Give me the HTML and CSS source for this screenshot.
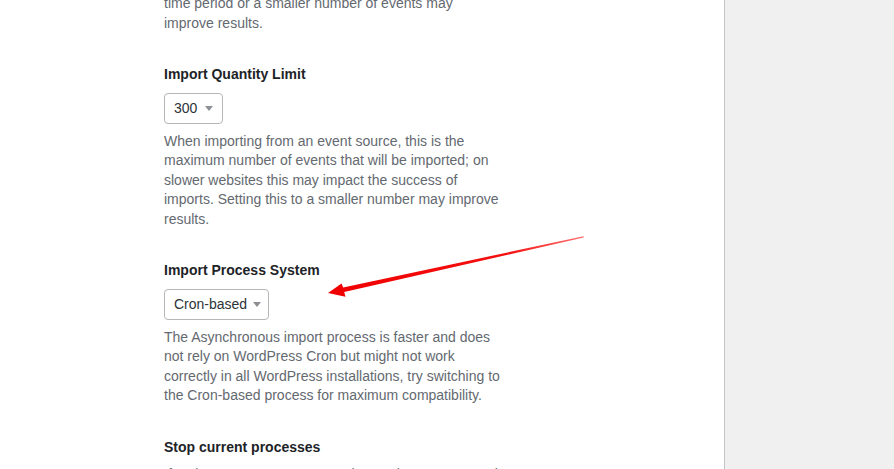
FILE: index.html
```html
<!DOCTYPE html>
<html lang="en">
<head>
  <meta charset="UTF-8" />
  <meta name="viewport" content="width=device-width, initial-scale=1.0" />
  <title>Import Settings</title>
  <link rel="stylesheet" href="styles.css">
</head>
<body>
  <div class="page">
    <div class="main">
      <div class="settings">
        <div class="field first">
          <p class="description">time period or a smaller number of events may improve results.</p>
        </div>

        <div class="field">
          <h3>Import Quantity Limit</h3>
          <div class="select small">
            <span>300</span>
            <svg width="8" height="5" viewBox="0 0 8 5"><path d="M0 0h8L4 5z" fill="#8c8f94"/></svg>
          </div>
          <p class="description">When importing from an event source, this is the maximum number of events that will be imported; on slower websites this may impact the success of imports. Setting this to a smaller number may improve results.</p>
        </div>

        <div class="field">
          <h3>Import Process System</h3>
          <div class="select">
            <span>Cron-based</span>
            <svg width="8" height="5" viewBox="0 0 8 5"><path d="M0 0h8L4 5z" fill="#8c8f94"/></svg>
          </div>
          <p class="description">The Asynchronous import process is faster and does not rely on WordPress Cron but might not work correctly in all WordPress installations, try switching to the Cron-based process for maximum compatibility.</p>
        </div>

        <div class="field">
          <h3>Stop current processes</h3>
          <p class="description">If an import process seems to be stuck, you can stop it here.</p>
        </div>
      </div>
    </div>
    <div class="sidebar"></div>

    <!-- annotation arrow -->
    <svg class="arrow" width="894" height="469" viewBox="0 0 894 469">
      <defs>
        <linearGradient id="fade" x1="328" y1="293" x2="584" y2="237" gradientUnits="userSpaceOnUse">
          <stop offset="0" stop-color="#f00000"/>
          <stop offset="0.7" stop-color="#f41010"/>
          <stop offset="1" stop-color="#ff7070"/>
        </linearGradient>
      </defs>
      <polygon points="328,293 341.5,283.5 343.2,287.4 583.5,236.3 583.7,237.5 344.2,291.9 345.5,296.8" fill="url(#fade)"/>
    </svg>
  </div>
</body>
</html>
```

FILE: styles.css
```css
body {
  margin: 0;
  padding: 0;
  background-color: #f0f0f1;
  font-family: "Liberation Sans", Arial, sans-serif;
  font-size: 14px;
  color: #1d2327;
}

.page {
  position: relative;
  display: flex;
  height: 469px;
  overflow: hidden;
}

.main {
  width: 724px;
  background-color: #fff;
  border-right: 1px solid #c3c4c7;
}

.sidebar {
  flex: 1;
  background-color: #f0f0f1;
}

.settings {
  padding-left: 164px;
  width: 340px;
}

.field {
  margin-top: 32px;
}

.field.first {
  margin-top: -6px;
}

.field h3 {
  margin: 0 0 8px;
  font-size: 14px;
  font-weight: bold;
  line-height: 19.5px;
  color: #1d2327;
}

.description {
  margin: 0;
  line-height: 19.5px;
  color: #646970;
}

.select {
  box-sizing: border-box;
  display: flex;
  align-items: center;
  justify-content: space-between;
  width: 105px;
  height: 31px;
  padding: 0 7px 0 9px;
  margin-bottom: 8px;
  border: 1px solid #b4b6b9;
  border-radius: 4px;
  color: #2c3338;
  background-color: #fff;
}

.select.small {
  width: 59px;
  padding-right: 9px;
}

.arrow {
  position: absolute;
  left: 0;
  top: 0;
  pointer-events: none;
}
```
